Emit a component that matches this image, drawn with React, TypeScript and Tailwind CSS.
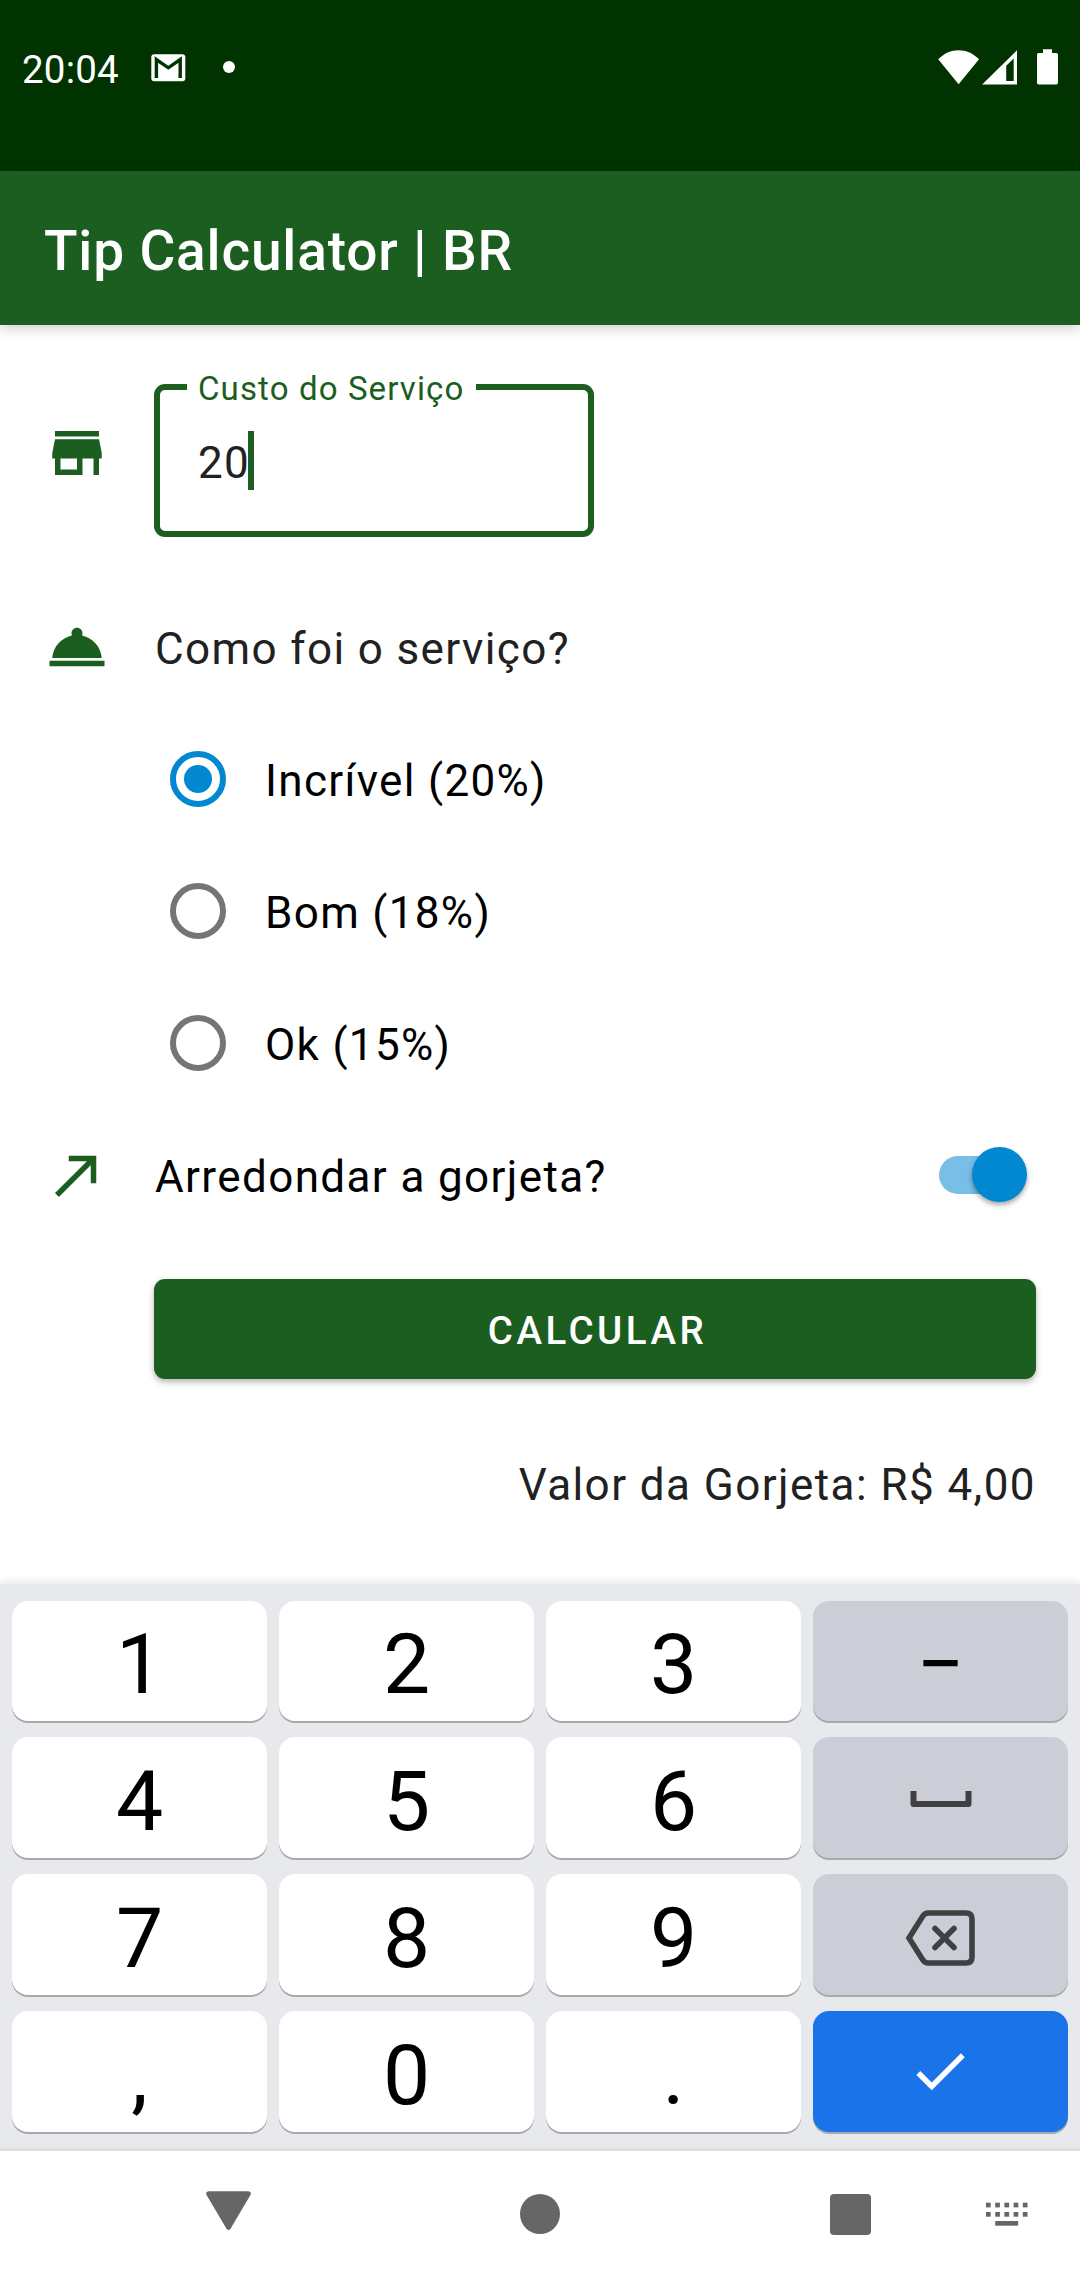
import React, { useState } from "react";

const STORE =
  "M20 4H4v2h16V4zm1 10v-2l-1-5H4l-1 5v2h1v6h10v-6h4v6h2v-6h1zm-9 4H6v-4h6v4z";
const ROOM_SERVICE =
  "M2 17h20v2H2zm11.84-9.21c.1-.24.16-.51.16-.79 0-1.1-.9-2-2-2s-2 .9-2 2c0 .28.06.55.16.79C6.25 8.6 3.27 11.93 3 16h18c-.27-4.07-3.25-7.4-7.16-8.21z";
const CALL_MADE = "M9 5v2h6.59L4 18.59 5.41 20 17 8.41V15h2V5z";
const CHECK = "M9 16.17L4.83 12l-1.42 1.41L9 19 21 7l-1.41-1.41z";

function Icon({ d }: { d: string }) {
  return (
    <svg viewBox="0 0 24 24" className="h-[66px] w-[66px] shrink-0" fill="currentColor">
      <path d={d} />
    </svg>
  );
}

function StatusBar() {
  return (
    <header className="flex h-[171px] items-start bg-[#003300] pl-[22px] pr-[22px] pt-[49px] text-white">
      <span className="mt-[-1px] w-[129px] text-[38.5px] leading-[44px] tracking-[0.2px]">20:04</span>
      <svg width="35" height="28" viewBox="0 0 35 28" className="mt-[4.5px]">
        <rect x="0.3" y="0.3" width="34" height="27" rx="3" fill="#fff" />
        <path d="M5.4 24V5.5L17.3 13.8 29.2 5.5V24" fill="none" stroke="#003300" strokeWidth="3.4" />
      </svg>
      <span className="ml-[37px] mt-3 h-3 w-3 rounded-full bg-white" />
      <div className="ml-auto flex items-start">
        <svg width="42" height="36" viewBox="0 0 42 36" fill="#fff">
          <path d="M0.2 10.3C6 4.5 13 1.3 20.6 1.3S35.2 4.5 41 10.3L20.6 35.3z" />
        </svg>
        <svg width="36" height="36" viewBox="0 0 36 36" fill="#fff" className="ml-[2px]">
          <path fillRule="evenodd" d="M0.2 35.5L35 1.2V35.5zM24.2 16.7V32H31.7V9.5z" />
        </svg>
        <svg width="21" height="36" viewBox="0 0 21 36" fill="#fff" className="ml-[19px]">
          <path d="M6 0.2h9V4h4.2A1.8 1.8 0 0 1 21 5.8v27.9a1.8 1.8 0 0 1-1.8 1.8H1.8A1.8 1.8 0 0 1 0 33.7V5.8A1.8 1.8 0 0 1 1.8 4H6z" />
        </svg>
      </div>
    </header>
  );
}

function CostField() {
  return (
    <div className="relative mt-[58px] flex h-[153px] w-[440px] items-center rounded-[11px] border-[6px] border-[#1b5e20] pl-[38px]">
      <label className="absolute -top-[20px] left-[27px] w-[289px] bg-white pl-[11px] text-[33px] leading-[38px] tracking-[1.12px] text-[#1b5e20]">
        Custo do Serviço
      </label>
      <div className="flex items-center text-[44px] tracking-[1.38px] text-[#212121]">
        <span className="mt-[5px] leading-[59px]">20</span>
        <span className="ml-[-2px] h-[59px] w-[6px] bg-[#1b5e20]" />
      </div>
    </div>
  );
}

function RadioOption({ label, checked, onSelect }: { label: string; checked: boolean; onSelect: () => void }) {
  return (
    <div role="radio" aria-checked={checked} onClick={onSelect} className="flex h-[132px] items-center pl-4">
      <span
        className={
          checked
            ? "flex h-[56px] w-[56px] items-center justify-center rounded-full border-[6px] border-[#0288d1]"
            : "flex h-[56px] w-[56px] items-center justify-center rounded-full border-[6px] border-[#757575]"
        }
      >
        {checked && <span className="h-7 w-7 rounded-full bg-[#0288d1]" />}
      </span>
      <span className="ml-[39px] mt-[4px] text-[44px] leading-[60px] tracking-[1.33px] text-black">{label}</span>
    </div>
  );
}

const OPTIONS = ["Incrível (20%)", "Bom (18%)", "Ok (15%)"];

function TipForm() {
  const [selected, setSelected] = useState(0);
  return (
    <main className="h-[1259px] bg-white px-[44px] pt-[1px]">
      <div className="flex h-[211px] items-start">
        <span className="mt-[94px] text-[#1b5e20]">
          <Icon d={STORE} />
        </span>
        <div className="ml-[44px]">
          <CostField />
        </div>
      </div>
      <div className="mt-[77px] flex h-[66px] items-center text-[#1b5e20]">
        <Icon d={ROOM_SERVICE} />
        <span className="ml-[45px] mt-[4px] text-[44px] leading-[60px] tracking-[1.38px] text-[#212121]">
          Como foi o serviço?
        </span>
      </div>
      <div role="radiogroup" className="ml-[110px] mt-[33px]">
        {OPTIONS.map((o, i) => (
          <RadioOption key={o} label={o} checked={selected === i} onSelect={() => setSelected(i)} />
        ))}
      </div>
      <div className="mt-[33px] flex h-[66px] items-center text-[#1b5e20]">
        <Icon d={CALL_MADE} />
        <span className="ml-[45px] mt-[4px] text-[44px] leading-[60px] tracking-[1.38px] text-black">
          Arredondar a gorjeta?
        </span>
        <span
          role="switch"
          aria-checked
          className="ml-auto mr-[14px] flex h-[38px] w-[83px] items-center justify-end rounded-full bg-[#78bee7]"
        >
          <span className="mb-[1px] mr-[-5px] h-[55px] w-[55px] shrink-0 rounded-full bg-[#0288d1] shadow-[0_3px_5px_rgba(0,0,0,0.35)]" />
        </span>
      </div>
      <button className="ml-[110px] mt-[71px] flex h-[100px] w-[882px] items-center justify-center rounded-[11px] bg-[#1b5e20] pl-[5px] pt-[3px] text-[38.5px] font-medium leading-[50px] tracking-[3.5px] text-white shadow-[0_3px_6px_rgba(0,0,0,0.3)]">
        CALCULAR
      </button>
      <p className="mt-[76px] text-right text-[44px] leading-[60px] tracking-[1.43px] text-[#212121]">
        Valor da Gorjeta: R$ 4,00
      </p>
    </main>
  );
}

const KEY_BASE =
  "flex h-full items-center justify-center rounded-[16px] text-[84px] leading-[100px] text-black shadow-[0_2px_0_#a8a9ac]";

function Key({ tone = "light", children }: { tone?: "light" | "gray" | "blue"; children: React.ReactNode }) {
  const bg = { light: "bg-white", gray: "bg-[#cbced6]", blue: "bg-[#1a73e8]" }[tone];
  return <div className={`${KEY_BASE} ${bg}`}>{children}</div>;
}

function Digit({ children }: { children: string }) {
  return <span className="mt-[8px]">{children}</span>;
}

function Keyboard() {
  return (
    <section className="relative grid h-[564px] grid-cols-4 grid-rows-[120px_121px_121px_121px] gap-x-3 gap-y-4 bg-[#e8e9ed] px-3 pt-[17px] shadow-[0_-2px_8px_rgba(0,0,0,0.1)]">
      <Key><Digit>1</Digit></Key>
      <Key><Digit>2</Digit></Key>
      <Key><Digit>3</Digit></Key>
      <Key tone="gray"><Digit>−</Digit></Key>
      <Key><Digit>4</Digit></Key>
      <Key><Digit>5</Digit></Key>
      <Key><Digit>6</Digit></Key>
      <Key tone="gray">
        <svg width="62" height="18" viewBox="0 0 62 18" className="mt-[3px]" fill="none" stroke="#404042" strokeWidth="6" strokeLinejoin="round">
          <path d="M3.5 1V14H58.5V1" />
        </svg>
      </Key>
      <Key><Digit>7</Digit></Key>
      <Key><Digit>8</Digit></Key>
      <Key><Digit>9</Digit></Key>
      <Key tone="gray">
        <svg width="70" height="56" viewBox="0 0 70 56" className="mr-[2px] mt-[6px]" fill="none" stroke="#404042" strokeWidth="5.6">
          <path d="M4 28L18 5.8Q20 3 23 3H61Q67 3 67 9V47Q67 53 61 53H23Q20 53 18 50.2Z" />
          <path d="M30 18.500L49 37.5M49 18.500L30 37.5" strokeLinecap="round" />
        </svg>
      </Key>
      <Key><Digit>,</Digit></Key>
      <Key><Digit>0</Digit></Key>
      <Key><Digit>.</Digit></Key>
      <Key tone="blue">
        <span className="mb-[1px] mr-[2px] text-white">
          <Icon d={CHECK} />
        </span>
      </Key>
    </section>
  );
}

function NavBar() {
  return (
    <nav className="relative flex h-[132px] items-start border-t-[3px] border-[#dfdfdf] bg-white pl-[206px] text-[#666]">
      <svg width="45" height="40" viewBox="0 0 45 40" className="mt-[40px]" fill="currentColor">
        <path d="M2.5 0.3H42.5Q46 0.8 44.3 4.3L24.5 37.7Q22.5 40.5 20.5 37.7L0.7 4.3Q-1 0.8 2.5 0.3Z" />
      </svg>
      <span className="ml-[269px] mt-[43px] h-10 w-10 rounded-full bg-[#666]" />
      <span className="ml-[270px] mt-[43px] h-[41px] w-[41px] rounded-[4px] bg-[#666]" />
      <svg width="42" height="24" viewBox="0 0 42 24" className="ml-[115px] mt-[51px]" fill="currentColor">
        {[0, 1, 2, 3, 4].map((c) => (
          <g key={c}>
            <rect x={c * 9.2} y="0.7" width="4.7" height="4.7" />
            <rect x={c * 9.2} y="10" width="4.7" height="4.7" />
          </g>
        ))}
        <rect x="9.2" y="19" width="23" height="4.7" />
      </svg>
    </nav>
  );
}

export default function App() {
  return (
    <div className="flex h-[2280px] w-[1080px] flex-col overflow-hidden bg-white font-['Roboto',sans-serif]">
      <StatusBar />
      <div className="relative flex h-[154px] shrink-0 items-center bg-[#1b5e20] pl-[44px] pt-[5px] text-[55px] font-medium leading-[70px] tracking-[0.82px] text-white shadow-[0_4px_12px_rgba(0,0,0,0.18)]">
        Tip Calculator | BR
      </div>
      <TipForm />
      <Keyboard />
      <NavBar />
    </div>
  );
}
